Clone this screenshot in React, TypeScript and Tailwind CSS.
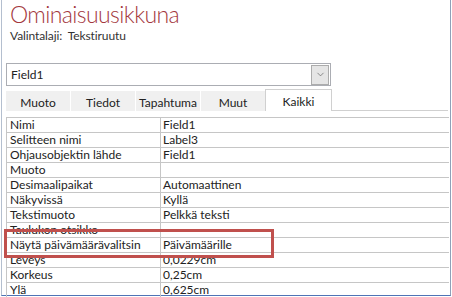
import { ChevronDown } from "lucide-react";

const rows: [string, string][] = [
  ["Nimi", "Field1"],
  ["Selitteen nimi", "Label3"],
  ["Ohjausobjektin lähde", "Field1"],
  ["Muoto", ""],
  ["Desimaalipaikat", "Automaattinen"],
  ["Näkyvissä", "Kyllä"],
  ["Tekstimuoto", "Pelkkä teksti"],
  ["Taulukon otsikko", ""],
  ["Näytä päivämäärävalitsin", "Päivämäärille"],
  ["Leveys", "0,0229cm"],
  ["Korkeus", "0,25cm"],
  ["Ylä", "0,625cm"],
];

const tabs = [
  { label: "Muoto", w: "w-[64px]" },
  { label: "Tiedot", w: "w-[65px]" },
  { label: "Tapahtuma", w: "w-[65px]" },
  { label: "Muut", w: "w-[65px]" },
];

export default function App() {
  return (
    <div className="w-[452px] h-[297px] bg-white overflow-hidden font-['Lato','Liberation_Sans',sans-serif] text-[#222]">
      <div className="ml-[1px] w-[450px] h-[296px] border-l border-r border-b border-l-[#b4bfcf] border-r-[#8fa0b8] border-b-[#4f73b5] relative">
        {/* header */}
        <div className="pl-[8px]">
          <h1 className="text-[23px] leading-[28px] font-light text-[#a3373d] tracking-[-0.6px]">Ominaisuusikkuna</h1>
          <div className="mt-[1px] text-[12px] leading-[14px] text-[#333] tracking-[-0.1px]">
            Valintalaji:&nbsp;&nbsp;Tekstiruutu
          </div>
        </div>

        {/* object selector */}
        <div className="mt-[20px] ml-[4px] w-[325px] h-[23px] border border-[#abadb3] flex items-center justify-between pl-[4px] pr-[1px]">
          <span className="text-[12px]">Field1</span>
          <div className="w-[18px] h-[20px] bg-[#e5e5e5] border border-[#acacac] flex items-center justify-center">
            <ChevronDown className="w-[11px] h-[11px] text-[#606060]" strokeWidth={1.5} />
          </div>
        </div>

        {/* tabs */}
        <div className="mt-[3px] ml-[4px] flex items-end h-[22px] border-b border-[#d0d0d0] w-[442px]">
          {tabs.map((t) => (
            <div
              key={t.label}
              className={`${t.w} h-[20px] mb-[-1px] bg-[#f0f0f0] border-l border-white first:border-l-0 flex items-center justify-center pt-[4px] text-[12px]`}
            >
              {t.label}
            </div>
          ))}
          <div className="w-[67px] h-[22px] mb-[-1px] bg-white border border-b-0 border-[#d0d0d0] flex items-start justify-center pt-[3px] text-[12px]">
            Kaikki
          </div>
        </div>

        {/* property grid */}
        <div className="mt-[6px] ml-[4px] w-[443px] border-t border-l border-[#c6c6c6]">
          {rows.map(([k, v]) => (
            <div key={k} className="flex h-[15px] border-b border-[#c6c6c6] text-[12px] leading-[14px]">
              <div className="w-[154px] border-r border-[#c6c6c6] pl-[3px] whitespace-nowrap">{k}</div>
              <div className="flex-1 pl-[2px] whitespace-nowrap">{v}</div>
            </div>
          ))}
        </div>

        {/* highlight box */}
        <div className="absolute left-[2px] top-[229px] w-[270px] h-[29px] border-[3px] border-[#c0504d]" />
      </div>
    </div>
  );
}
